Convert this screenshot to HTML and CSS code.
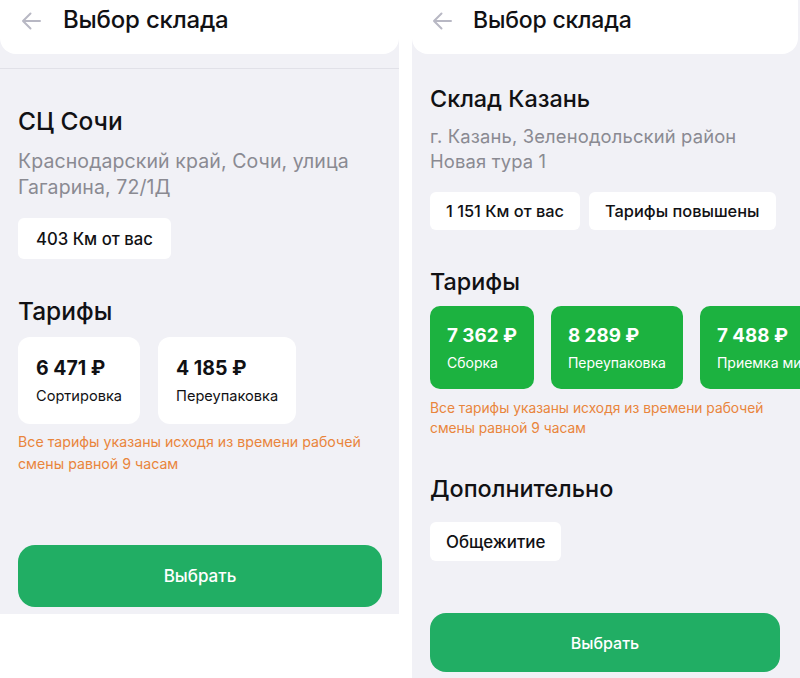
FILE: index.html
```html
<!DOCTYPE html>
<html lang="ru">
<head>
<meta charset="utf-8">
<link rel="stylesheet" href="styles.css">
</head>
<body>
<div class="screens">
  <section class="panel panel-left">
    <header class="topbar">
      <svg class="back" width="20" height="18" viewBox="0 0 20 18"><path d="M19 9H2M9.5 1.5L2 9l7.5 7.5" fill="none" stroke="#b8b8c4" stroke-width="2" stroke-linecap="round" stroke-linejoin="round"/></svg>
      <h1 class="title">Выбор склада</h1>
    </header>
    <div class="divider"></div>
    <div class="content">
      <h2 class="name">СЦ Сочи</h2>
      <p class="address">Краснодарский край, Сочи, улица Гагарина, 72/1Д</p>
      <div class="chips">
        <span class="chip">403 Км от вас</span>
      </div>
      <h3 class="section">Тарифы</h3>
      <div class="tariffs">
        <div class="tariff"><div class="price">6 471 ₽</div><div class="label">Сортировка</div></div>
        <div class="tariff"><div class="price">4 185 ₽</div><div class="label">Переупаковка</div></div>
      </div>
      <p class="note">Все тарифы указаны исходя из времени рабочей смены равной 9 часам</p>
    </div>
    <button class="select">Выбрать</button>
  </section>

  <section class="panel panel-right">
    <header class="topbar">
      <svg class="back" width="20" height="18" viewBox="0 0 20 18"><path d="M19 9H2M9.5 1.5L2 9l7.5 7.5" fill="none" stroke="#b8b8c4" stroke-width="2" stroke-linecap="round" stroke-linejoin="round"/></svg>
      <h1 class="title">Выбор склада</h1>
    </header>
    <div class="content">
      <h2 class="name">Склад Казань</h2>
      <p class="address">г. Казань, Зеленодольский район<br>Новая тура 1</p>
      <div class="chips">
        <span class="chip">1 151 Км от вас</span>
        <span class="chip">Тарифы повышены</span>
      </div>
      <h3 class="section">Тарифы</h3>
      <div class="tariffs">
        <div class="tariff green"><div class="price">7 362 ₽</div><div class="label">Сборка</div></div>
        <div class="tariff green"><div class="price">8 289 ₽</div><div class="label">Переупаковка</div></div>
        <div class="tariff green"><div class="price">7 488 ₽</div><div class="label">Приемка ми</div></div>
      </div>
      <p class="note">Все тарифы указаны исходя из времени рабочей смены равной 9 часам</p>
      <h3 class="section extra">Дополнительно</h3>
      <div class="chips">
        <span class="chip">Общежитие</span>
      </div>
    </div>
    <button class="select">Выбрать</button>
  </section>
</div>
</body>
</html>
```

FILE: styles.css
```css
* { box-sizing: border-box; margin: 0; padding: 0; }
html, body { background: #fff; }
body {
  margin: 0;
  font-family: Inter, "Noto Sans", "Liberation Sans", sans-serif;
  color: #111114;
  width: 800px;
  height: 678px;
  overflow: hidden;
}
.screens {
  display: flex;
  gap: 13px;
  align-items: flex-start;
}
.panel {
  background: #f1f1f6;
  display: flex;
  flex-direction: column;
  overflow: hidden;
}
.panel-left { width: 399px; height: 614px; padding-bottom: 7px; }
.panel-right { width: 388px; height: 678px; padding-bottom: 6px; }

.topbar {
  background: #fff;
  height: 54px;
  border-radius: 0 0 16px 16px;
  display: flex;
  align-items: flex-start;
  padding-top: 4px;
  flex-shrink: 0;
}
.back { margin-top: 8px; }
.title {
  font-size: 24px;
  font-weight: 500;
  line-height: 32px;
  letter-spacing: -0.2px;
}
.panel-left .topbar { padding-left: 21px; }
.panel-left .title { margin-left: 22px; }
.panel-right .topbar { padding-left: 20px; margin-right: 2px; }
.panel-right .title { margin-left: 21px; font-size: 23px; }

.divider { height: 1px; background: #e1e1e8; margin-top: 14px; }

.content { padding: 0 18px; }

.name { font-weight: 500; }
.address { color: #8a8a92; }
.chips { display: flex; gap: 9px; }
.chip {
  background: #fff;
  border-radius: 6px;
  display: flex;
  align-items: center;
  font-weight: 500;
  white-space: nowrap;
}
.section { font-weight: 500; }
.tariffs { display: flex; flex-wrap: nowrap; }
.tariff {
  background: #fff;
  flex-shrink: 0;
  white-space: nowrap;
}
.price { font-weight: 700; }
.note { color: #e9853c; }
.select {
  margin-top: auto;
  border: none;
  background: #21ae64;
  color: #fff;
  font-family: inherit;
  font-weight: 500;
  flex-shrink: 0;
}

/* left screen */
.panel-left .name { font-size: 24.5px; line-height: 30px; margin-top: 37px; }
.panel-left .address { font-size: 19.5px; line-height: 26px; margin-top: 12px; letter-spacing: 0.1px; }
.panel-left .chips { margin-top: 18px; }
.panel-left .chip { height: 41px; padding: 0 18px; font-size: 16.7px; }
.panel-left .section { font-size: 24.5px; line-height: 30px; margin-top: 37px; }
.panel-left .tariffs { margin-top: 11px; gap: 18px; }
.panel-left .tariff { height: 87px; padding: 20px 18px 0; border-radius: 12px; }
.panel-left .price { font-size: 19.5px; line-height: 22px; }
.panel-left .label { font-size: 14.6px; line-height: 20px; margin-top: 7px; }
.panel-left .note { font-size: 14.2px; line-height: 22px; margin-top: 7px; }
.panel-left .select { margin-left: 18px; margin-right: 17px; height: 62px; border-radius: 17px; font-size: 17px; }

/* right screen */
.panel-right .content { padding: 0 18px; }
.panel-right .name { font-size: 23.4px; line-height: 28px; margin-top: 31px; }
.panel-right .address { font-size: 18.4px; line-height: 25px; margin-top: 11px; letter-spacing: 0.15px; }
.panel-right .chips { margin-top: 18px; }
.panel-right .chip { height: 38px; padding: 0 16px; font-size: 16.4px; }
.panel-right .section { font-size: 23.4px; line-height: 28px; margin-top: 38px; }
.panel-right .section.extra { margin-top: 37px; }
.panel-right .tariffs { margin-top: 10px; gap: 17px; }
.panel-right .tariff { height: 83px; padding: 19px 17px 0; border-radius: 10px; }
.tariff.green { background: #1cb240; color: #fff; }
.panel-right .price { font-size: 18.8px; line-height: 22px; }
.panel-right .label { font-size: 14px; line-height: 18px; margin-top: 7px; }
.panel-right .note { font-size: 13.8px; line-height: 20px; margin-top: 9px; }
.panel-right .chips:last-child { margin-top: 19px; }
.panel-right .chips:last-child .chip { font-size: 16.9px; height: 39px; }
.panel-right .select { margin-left: 18px; margin-right: 20px; height: 59px; border-radius: 16px; font-size: 16px; }
```
